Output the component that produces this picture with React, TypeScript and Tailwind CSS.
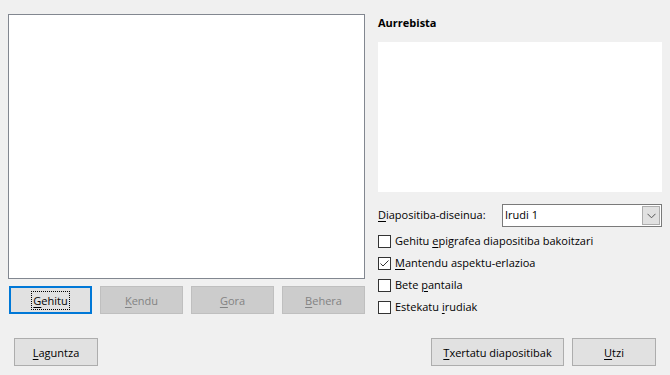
import React from 'react';

const font = { fontFamily: '"Segoe UI", "Open Sans", "Liberation Sans", sans-serif' };

const Btn: React.FC<{ k: string; rest: string; w: string; disabled?: boolean; focused?: boolean }> = ({ k, rest, w, disabled, focused }) => (
    <div
        className={`${w} h-[28px] flex items-center justify-center text-[11px] leading-none ${
            focused
                ? 'border-2 border-[#0078d7] bg-[#e1e1e1] text-black'
                : disabled
                ? 'border border-[#bfbfbf] bg-[#cccccc] text-[#838383]'
                : 'border border-[#adadad] bg-[#e1e1e1] text-black'
        }`}
    >
        <span className={focused ? 'outline outline-1 outline-dotted outline-black px-[1px] py-[3px]' : ''}>
            <span className="underline underline-offset-2">{k}</span>{rest}
        </span>
    </div>
);

const Check: React.FC<{ pre?: string; k: string; rest: string; checked?: boolean }> = ({ pre = '', k, rest, checked }) => (
    <div className="h-[22px] flex items-center gap-[4px]">
        <div className="w-[13px] h-[13px] border border-[#333333] bg-white flex items-center justify-center">
            {checked && (
                <svg width="11" height="11" viewBox="0 0 11 11">
                    <path d="M1.5 5.5 L4 8 L9.5 2.5" fill="none" stroke="#333" strokeWidth="1" />
                </svg>
            )}
        </div>
        <span className="text-[11px] text-black">
            {pre}<span className="underline underline-offset-2">{k}</span>{rest}
        </span>
    </div>
);

const App: React.FC = () => {
    return (
        <div className="w-[670px] h-[375px] bg-[#f0f0f0] flex flex-col" style={font}>
            <div className="flex pl-[8px] pt-[14px]">
                {/* left list */}
                <div className="w-[357px] flex flex-col">
                    <div className="w-[357px] h-[265px] bg-white border border-[#828790]" />
                    <div className="flex gap-[8px] mt-[7px] pl-[1px]">
                        <Btn k="G" rest="ehitu" w="w-[84px]" focused />
                        <Btn k="K" rest="endu" w="w-[84px]" disabled />
                        <Btn k="G" rest="ora" w="w-[84px]" disabled />
                        <Btn k="B" rest="ehera" w="w-[84px]" disabled />
                    </div>
                </div>

                {/* right side */}
                <div className="w-[284px] ml-[13px] flex flex-col">
                    <div className="text-[11px] font-bold leading-[16px] mt-[1px] mb-[11px] text-black">Aurrebista</div>
                    <div className="h-[150px] bg-white" />
                    <div className="flex items-center mt-[12px] h-[23px]">
                        <span className="w-[124px] text-[11px] text-black">
                            <span className="underline underline-offset-2">D</span>iapositiba-diseinua:
                        </span>
                        <div className="flex-1 h-[23px] bg-white border border-[#7a7a7a] flex items-stretch">
                            <span className="flex-1 flex items-center pl-[2px] text-[11px] text-black">Irudi 1</span>
                            <div className="w-[18px] my-[1px] mr-[1px] border border-[#adadad] bg-[#e1e1e1] flex items-center justify-center">
                                <svg width="9" height="6" viewBox="0 0 9 6">
                                    <path d="M0.5 0.8 L4.5 4.8 L8.5 0.8" fill="none" stroke="#555" strokeWidth="1" />
                                </svg>
                            </div>
                        </div>
                    </div>
                    <div className="flex flex-col mt-[3px]">
                        <Check pre="Gehitu " k="e" rest="pigrafea diapositiba bakoitzari" />
                        <Check k="M" rest="antendu aspektu-erlazioa" checked />
                        <Check pre="Bete " k="p" rest="antaila" />
                        <Check pre="Estekatu " k="i" rest="rudiak" />
                    </div>
                </div>
            </div>

            {/* footer */}
            <div className="flex items-center px-[14px] mt-[20px]">
                <Btn k="L" rest="aguntza" w="w-[84px]" />
                <div className="flex-1" />
                <Btn k="T" rest="xertatu diapositibak" w="w-[133px]" />
                <div className="w-[8px]" />
                <Btn k="U" rest="tzi" w="w-[84px]" />
            </div>
        </div>
    );
};

export default App;
